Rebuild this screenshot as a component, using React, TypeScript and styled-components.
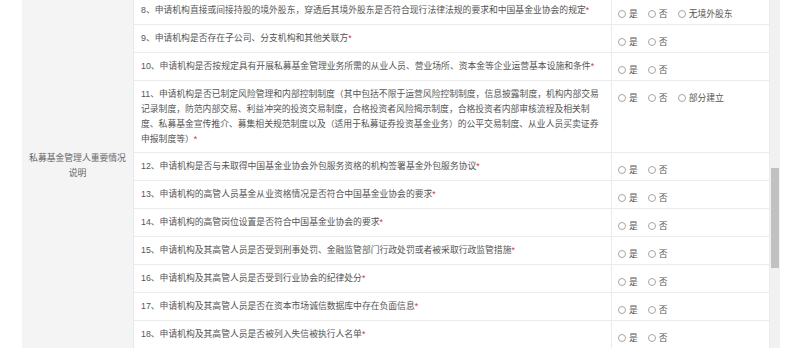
import React from 'react';
import styled, { createGlobalStyle } from 'styled-components';

const GlobalStyle = createGlobalStyle`
  html, body {
    margin: 0;
    padding: 0;
    background: #fff;
  }
  body {
    font-family: "Liberation Sans", "Noto Sans CJK SC", sans-serif;
    overflow: hidden;
  }
`;

interface Question {
  no: number;
  lines: string[];
  options: string[];
}

const yesNo = ['是', '否'];

const questions: Question[] = [
  {
    no: 8,
    lines: ['申请机构直接或间接持股的境外股东，穿透后其境外股东是否符合现行法律法规的要求和中国基金业协会的规定'],
    options: ['是', '否', '无境外股东'],
  },
  { no: 9, lines: ['申请机构是否存在子公司、分支机构和其他关联方'], options: yesNo },
  {
    no: 10,
    lines: ['申请机构是否按规定具有开展私募基金管理业务所需的从业人员、营业场所、资本金等企业运营基本设施和条件'],
    options: yesNo,
  },
  {
    no: 11,
    lines: [
      '申请机构是否已制定风险管理和内部控制制度（其中包括不限于运营风险控制制度，信息披露制度，机构内部交易',
      '记录制度，防范内部交易、利益冲突的投资交易制度，合格投资者风险揭示制度，合格投资者内部审核流程及相关制',
      '度、私募基金宣传推介、募集相关规范制度以及（适用于私募证券投资基金业务）的公平交易制度、从业人员买卖证券',
      '申报制度等）',
    ],
    options: ['是', '否', '部分建立'],
  },
  { no: 12, lines: ['申请机构是否与未取得中国基金业协会外包服务资格的机构签署基金外包服务协议'], options: yesNo },
  { no: 13, lines: ['申请机构的高管人员基金从业资格情况是否符合中国基金业协会的要求'], options: yesNo },
  { no: 14, lines: ['申请机构的高管岗位设置是否符合中国基金业协会的要求'], options: yesNo },
  { no: 15, lines: ['申请机构及其高管人员是否受到刑事处罚、金融监管部门行政处罚或者被采取行政监管措施'], options: yesNo },
  { no: 16, lines: ['申请机构及其高管人员是否受到行业协会的纪律处分'], options: yesNo },
  { no: 17, lines: ['申请机构及其高管人员是否在资本市场诚信数据库中存在负面信息'], options: yesNo },
  { no: 18, lines: ['申请机构及其高管人员是否被列入失信被执行人名单'], options: yesNo },
];

const Page = styled.div`
  display: flex;
  align-items: flex-start;
  height: 348px;
  padding-left: 22px;
  overflow: hidden;
`;

const Sheet = styled.div`
  display: flex;
  width: 748px;
  margin-top: -3px;
  box-sizing: border-box;
  border-right: 1px solid #ebebeb;
`;

const Label = styled.div`
  width: 112px;
  flex: none;
  box-sizing: border-box;
  padding: 154px 6px 0;
  background: #f4f4f4;
  border-right: 1px solid #e8e8e8;
  text-align: center;
  font-size: 8.8px;
  line-height: 15px;
  color: #666;
`;

const Rows = styled.div`
  display: flex;
  flex-direction: column;
  flex: 1;
`;

const Row = styled.div`
  display: grid;
  grid-template-columns: 477px 158px;
  border-bottom: 1px solid #ebebeb;
`;

const Ask = styled.div`
  padding: 6px 8px 5px 7px;
  font-size: 8.8px;
  line-height: 15px;
  color: #555;
  white-space: nowrap;
`;

const Star = styled.span`
  color: #e3302f;
`;

const Answer = styled.div`
  display: flex;
  align-items: flex-start;
  padding: 10px 6px 3px;
  border-left: 1px solid #ebebeb;
`;

const Option = styled.label`
  display: inline-flex;
  align-items: center;
  margin-right: 10px;
  font-size: 8.8px;
  line-height: 14px;
  color: #555;
`;

const Dot = styled.input`
  appearance: none;
  width: 8px;
  height: 8px;
  margin: 0 3px 0 0;
  box-sizing: border-box;
  border: 1px solid #a6a6a6;
  border-radius: 50%;
  background: #fff;
`;

const Track = styled.div`
  width: 10px;
  height: 348px;
  flex: none;
  box-sizing: border-box;
  padding: 0 1px;
  background: #f1f1f1;
`;

const Thumb = styled.div`
  margin-top: 168px;
  height: 100px;
  background: #c1c1c1;
`;

const App: React.FC = () => (
  <>
    <GlobalStyle />
    <Page>
      <Sheet>
        <Label>私募基金管理人重要情况说明</Label>
        <Rows>
          {questions.map((q) => (
            <Row key={q.no}>
              <Ask>
                {q.lines.map((line, i) => (
                  <React.Fragment key={i}>
                    {i === 0 ? `${q.no}、${line}` : line}
                    {i < q.lines.length - 1 ? <br /> : <Star>*</Star>}
                  </React.Fragment>
                ))}
              </Ask>
              <Answer>
                {q.options.map((opt) => (
                  <Option key={opt}>
                    <Dot type="radio" name={`q${q.no}`} />
                    {opt}
                  </Option>
                ))}
              </Answer>
            </Row>
          ))}
        </Rows>
      </Sheet>
      <Track>
        <Thumb />
      </Track>
    </Page>
  </>
);

export default App;
